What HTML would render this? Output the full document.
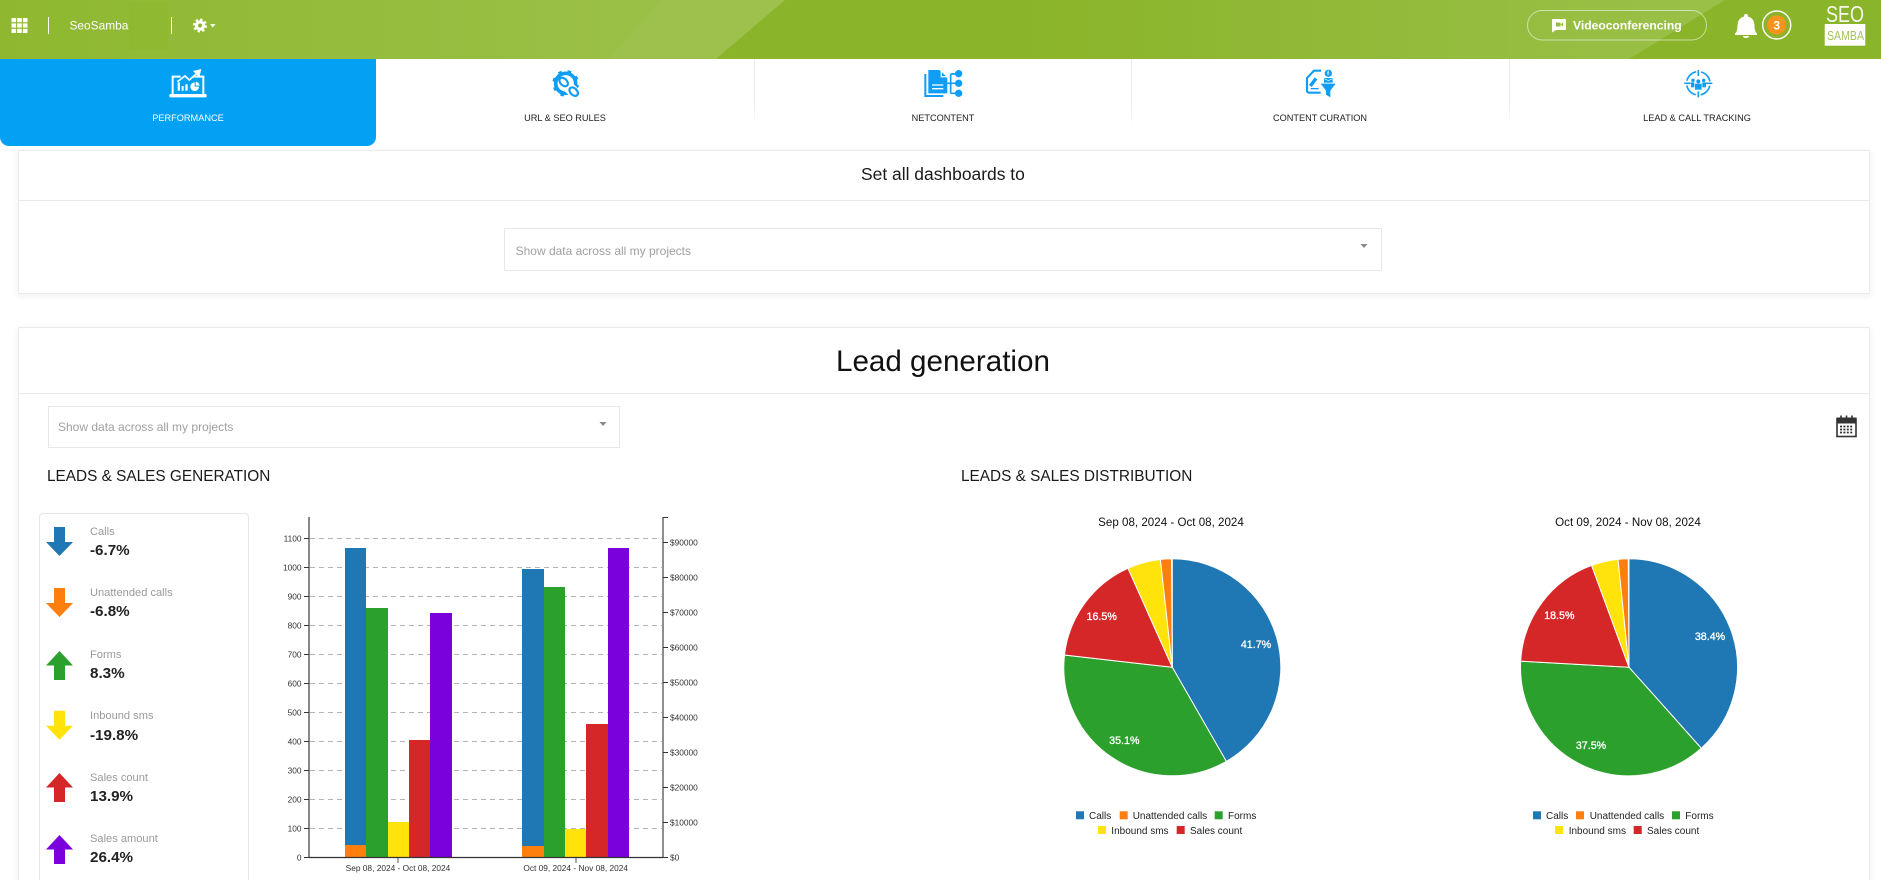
<!DOCTYPE html>
<html lang="en">
<head>
<meta charset="utf-8">
<title>SeoSamba dashboard</title>
<style>
html,body{margin:0;padding:0;width:1881px;height:880px;overflow:hidden;background:#fff;font-family:"Liberation Sans",Arial,sans-serif}
#p{position:relative;width:1881px;height:880px;overflow:hidden;background:#fff}
.t{position:absolute;white-space:nowrap;line-height:1}
.box{position:absolute;box-sizing:border-box;background:#fff}
.card{border:1px solid #ececec;box-shadow:0 2px 7px rgba(0,0,0,.07)}
.line{position:absolute;background:#e9e9e9;height:1px}
.sel{border:1px solid #e8e8e8}
.ph{font-size:12px;color:#a0a0a0}
.nav{font-size:9.2px;color:#222;width:200px;text-align:center;top:114px}
.div{position:absolute;top:59px;width:1px;height:68px;background:linear-gradient(#ececec 70%,#fff)}
.lab{font-size:11.1px;color:#9a9a9a;left:90px}
.val{font-size:15.2px;font-weight:bold;color:#222;left:90px}
.h2{font-size:15.37px;color:#1a1a1a}
svg#o{position:absolute;left:0;top:0}
svg text{font-family:"Liberation Sans",Arial,sans-serif}
</style>
</head>
<body>
<div id="p">

<div class="box card" style="left:18px;top:150px;width:1852px;height:144px"></div>
<div class="line" style="left:19px;top:200px;width:1850px"></div>
<div class="t" style="left:861px;top:166.4px;font-size:17.46px;color:#1a1a1a">Set all dashboards to</div>
<div class="box sel" style="left:504px;top:228px;width:878px;height:43px"></div>
<div class="t ph" style="left:515.6px;top:244.8px">Show data across all my projects</div>

<div class="box card" style="left:18px;top:327px;width:1852px;height:570px"></div>
<div class="line" style="left:19px;top:393px;width:1850px"></div>
<div class="t" style="left:836px;top:346.6px;font-size:29.6px;color:#111">Lead generation</div>
<div class="box sel" style="left:48px;top:406px;width:572px;height:42px"></div>
<div class="t ph" style="left:58px;top:420.8px">Show data across all my projects</div>
<div class="t h2" style="left:47px;top:469px">LEADS &amp; SALES GENERATION</div>
<div class="t h2" style="left:961px;top:469px">LEADS &amp; SALES DISTRIBUTION</div>

<div class="box" style="left:38.5px;top:513px;width:210px;height:400px;border:1px solid #e6e6e6;border-radius:4px"></div>
<div class="t lab" style="top:527.2px">Calls</div><div class="t val" style="top:542.6px">-6.7%</div>
<div class="t lab" style="top:588.2px">Unattended calls</div><div class="t val" style="top:604.3px">-6.8%</div>
<div class="t lab" style="top:650.2px">Forms</div><div class="t val" style="top:665.6px">8.3%</div>
<div class="t lab" style="top:711.2px">Inbound sms</div><div class="t val" style="top:727.6px">-19.8%</div>
<div class="t lab" style="top:772.5px">Sales count</div><div class="t val" style="top:788.6px">13.9%</div>
<div class="t lab" style="top:834.2px">Sales amount</div><div class="t val" style="top:849.6px">26.4%</div>

<div class="box" style="left:0;top:59px;width:376px;height:87px;background:#02a1f4;border-radius:0 0 9px 9px"></div>
<div class="div" style="left:754px"></div>
<div class="div" style="left:1131px"></div>
<div class="div" style="left:1509px"></div>
<div class="t nav" style="left:88px;color:#fff">PERFORMANCE</div>
<div class="t nav" style="left:465px">URL &amp; SEO RULES</div>
<div class="t nav" style="left:843px">NETCONTENT</div>
<div class="t nav" style="left:1220px">CONTENT CURATION</div>
<div class="t nav" style="left:1597px">LEAD &amp; CALL TRACKING</div>

<svg id="o" width="1881" height="880" viewBox="0 0 1881 880" xmlns="http://www.w3.org/2000/svg">
<defs>
<linearGradient id="g1" x1="0" x2="1" y1="0" y2="0"><stop offset="0" stop-color="#8fb830"/><stop offset="1" stop-color="#9bc047"/></linearGradient>
<linearGradient id="g2" x1="0" x2="1" y1="0" y2="0"><stop offset="0" stop-color="#8ab429"/><stop offset="1" stop-color="#9bc049"/></linearGradient>
</defs>

<!-- header -->
<rect width="1881" height="59" fill="#8ab429"/>
<polygon points="0,0 660,0 608,59 0,59" fill="url(#g1)"/>
<polygon points="660,0 785,0 716,59 608,59" fill="#9ec14e"/>
<rect x="129" y="2" width="39" height="48" fill="#8bb62c" opacity=".3"/>
<polygon points="1000,0 1725,0 1629,59 1000,59" fill="url(#g2)"/>
<g fill="#fff">
<rect x="11.5" y="18" width="4.6" height="4.2"/><rect x="17.2" y="18" width="4.6" height="4.2"/><rect x="22.9" y="18" width="4.6" height="4.2"/>
<rect x="11.5" y="23.4" width="4.6" height="4.2"/><rect x="17.2" y="23.4" width="4.6" height="4.2"/><rect x="22.9" y="23.4" width="4.6" height="4.2"/>
<rect x="11.5" y="28.8" width="4.6" height="4.2"/><rect x="17.2" y="28.8" width="4.6" height="4.2"/><rect x="22.9" y="28.8" width="4.6" height="4.2"/>
<rect x="48" y="17" width="1" height="17"/><rect x="171" y="17" width="1" height="17"/>
<circle cx="200" cy="25.5" r="5.2"/>
<polygon points="210,24 215.5,24 212.7,27.5" opacity=".9"/>
</g>
<circle cx="200" cy="25.5" r="5.9" fill="none" stroke="#fff" stroke-width="2.2" stroke-dasharray="2.32 2.32"/>
<circle cx="200" cy="25.5" r="2" fill="#8fb830"/>
<text x="69.5" y="29.3" font-size="11.9" fill="#fff">SeoSamba</text>

<rect x="1527.5" y="10.5" width="179" height="29.5" rx="14.7" fill="none" stroke="#fff" stroke-opacity=".55"/>
<path d="M1553 19h12a1 1 0 0 1 1 1v9a1 1 0 0 1-1 1h-9l-4 2.5v-12.5a1 1 0 0 1 1-1z" fill="#fff"/>
<rect x="1556" y="22.5" width="4.5" height="4" fill="#97bd40"/><polygon points="1560.5,24.5 1563,22.5 1563,26.5" fill="#97bd40"/>
<text x="1573" y="29.3" font-size="12.1" font-weight="bold" fill="#fff">Videoconferencing</text>
<path d="M1746 14c1.4 0 2 .9 2 2v.6c4.6 1 6.5 4.8 6.5 9c0 3.7.7 6 2.5 8v1.4h-22v-1.4c1.8-2 2.5-4.3 2.5-8c0-4.2 1.9-8 6.5-9v-.6c0-1.1.6-2 2-2z" fill="#fff"/>
<path d="M1742.8 36h6.4a3.2 2 0 0 1-6.4 0z" fill="#fff"/>
<circle cx="1776.7" cy="25" r="14" fill="none" stroke="#fff" stroke-width="1.4"/>
<circle cx="1776.7" cy="25" r="9.6" fill="#f7941d"/>
<text x="1776.7" y="29.3" font-size="12" font-weight="bold" fill="#fff" text-anchor="middle">3</text>
<text x="1826" y="22" font-size="23.5" fill="#fff" fill-opacity=".92" textLength="38" lengthAdjust="spacingAndGlyphs">SEO</text>
<rect x="1824.7" y="24" width="40.6" height="21.7" fill="#fff"/>
<text x="1827" y="40" font-size="13" fill="#a3c35f" textLength="37" lengthAdjust="spacingAndGlyphs">SAMBA</text>

<!-- nav icons -->
<g transform="translate(130 50) scale(.3333)">
<path d="M128 132V80H152M190 80H220V132" fill="none" stroke="#fff" stroke-width="6"/>
<rect x="118" y="132" width="112" height="10" rx="3" fill="#fff"/>
<polyline points="142,95 165,78 178,90 203,68" fill="none" stroke="#fff" stroke-width="5"/>
<polygon points="214,57 189,63 208,82" fill="#fff"/>
<rect x="143" y="97" width="7" height="25" fill="#fff"/><rect x="155" y="108" width="6" height="14" fill="#fff"/><rect x="166" y="103" width="7" height="19" fill="#fff"/>
<path d="M194 97a13 13 0 1 0 13 13h-13z" fill="#fff"/><path d="M197 95a13 13 0 0 1 12 12h-12z" fill="#fff"/>
</g>
<g transform="translate(530 50) scale(.3333)" fill="none" stroke="#0f9df5">
<circle cx="107" cy="100" r="30" stroke-width="11"/>
<circle cx="107" cy="100" r="37" stroke-width="6" stroke-dasharray="11 18" transform="rotate(8 107 100)"/>
<path d="M100 97L133 128" stroke="#fff" stroke-width="34" stroke-linecap="butt"/>
<ellipse cx="101" cy="96" rx="15" ry="10" stroke-width="6.5" transform="rotate(45 101 96)"/>
<ellipse cx="131" cy="125" rx="15" ry="10" stroke-width="6.5" transform="rotate(45 131 125)"/>
</g>
<g transform="translate(900 50) scale(.3333)">
<path d="M85 60H118L142 85V130H85z" fill="#0f9df5"/>
<polygon points="122,60 122,82 144,82" fill="#fff"/>
<polygon points="126,67 126,78 137,78" fill="#0f9df5"/>
<path d="M76 72V138H130" fill="none" stroke="#0f9df5" stroke-width="6"/>
<path d="M96 105H130M96 116H130" stroke="#fff" stroke-width="4"/>
<path d="M142 100H176M152 72V130M152 72H176M152 130H176" fill="none" stroke="#0f9df5" stroke-width="5"/>
<circle cx="176" cy="71" r="11" fill="#0f9df5"/><circle cx="176" cy="100" r="11" fill="#0f9df5"/><circle cx="176" cy="130" r="11" fill="#0f9df5"/>
</g>
<g transform="translate(1290 50) scale(.3333)">
<path d="M93 62H72L51 84V122a6 6 0 0 0 6 6H92" fill="none" stroke="#0f9df5" stroke-width="6.5"/>
<path d="M61 108L78 85" stroke="#0f9df5" stroke-width="10"/>
<path d="M62 116H86" stroke="#0f9df5" stroke-width="4"/>
<circle cx="115" cy="70" r="11" fill="#0f9df5"/><path d="M117 63h-3v14M111 69h7" stroke="#fff" stroke-width="2" fill="none"/>
<rect x="102" y="84" width="26" height="14" fill="#0f9df5"/><path d="M103 86l12 6l12-6" stroke="#fff" stroke-width="2" fill="none"/>
<polygon points="92,101 137,101 121,122 121,142 108,134 108,122" fill="#0f9df5"/>
</g>
<g transform="translate(1500 0) scale(.3333)" fill="#0f9df5">
<circle cx="595" cy="250" r="35" fill="none" stroke="#0f9df5" stroke-width="5" stroke-dasharray="40 15" stroke-dashoffset="-7.5"/>
<path d="M595 210V228M595 274V292M553 250H572M618 250H637" stroke="#0f9df5" stroke-width="5"/>
<circle cx="595" cy="244" r="6"/><rect x="585" y="251" width="20" height="18"/>
<circle cx="579" cy="241" r="5"/><rect x="573" y="247" width="10" height="15"/>
<circle cx="611" cy="241" r="5"/><rect x="607" y="247" width="11" height="15"/>
</g>

<!-- select carets -->
<polygon points="1360.5,244 1367.5,244 1364,248" fill="#8a8a8a"/>
<polygon points="599.5,422 606.5,422 603,426" fill="#8a8a8a"/>

<!-- calendar -->
<g fill="none" stroke="#333">
<rect x="1837" y="419" width="19" height="17.5" stroke-width="1.6"/>
<rect x="1837" y="418" width="19" height="5" fill="#333"/>
<path d="M1841 415.5v3M1846.5 415.5v3M1852 415.5v3" stroke-width="1.6"/>
<path d="M1840 426.5h13M1840 429.5h13M1840 432.5h13" stroke-width="1.7" stroke-dasharray="2 1.4"/>
</g>

<!-- trend arrows -->
<polygon transform="translate(0 527)" points="54,0 65,0 65,15 73,15 59.5,29 46,15 54,15" fill="#1f77b4"/>
<polygon transform="translate(0 588)" points="54,0 65,0 65,15 73,15 59.5,29 46,15 54,15" fill="#ff7f0e"/>
<polygon transform="translate(0 651)" points="59.5,0 73,14.5 65,14.5 65,29 54,29 54,14.5 46,14.5" fill="#2ca02c"/>
<polygon transform="translate(0 710.7)" points="54,0 65,0 65,15 73,15 59.5,29 46,15 54,15" fill="#ffe30a"/>
<polygon transform="translate(0 773)" points="59.5,0 73,14.5 65,14.5 65,29 54,29 54,14.5 46,14.5" fill="#d62728"/>
<polygon transform="translate(0 835)" points="59.5,0 73,14.5 65,14.5 65,29 54,29 54,14.5 46,14.5" fill="#7a00dc"/>

<!-- bar chart -->
<g stroke="#b4b4b4" stroke-dasharray="5 4">
<path d="M310 538.5H662M310 567.5H662M310 596.5H662M310 625.5H662M310 654.5H662M310 683.5H662M310 712.5H662M310 741.5H662M310 770.5H662M310 799.5H662M310 828.5H662"/>
</g>
<rect x="345" y="548" width="21" height="297" fill="#1f77b4"/><rect x="345" y="845" width="21" height="12.5" fill="#ff7f0e"/>
<rect x="366" y="608" width="22" height="249.5" fill="#2ca02c"/>
<rect x="388" y="822" width="21" height="35.5" fill="#ffe30a"/>
<rect x="409" y="740" width="21" height="117.5" fill="#d62728"/>
<rect x="430" y="613" width="22" height="244.5" fill="#7a00dc"/>
<rect x="522" y="569" width="22" height="277" fill="#1f77b4"/><rect x="522" y="846" width="22" height="11.5" fill="#ff7f0e"/>
<rect x="544" y="587" width="21" height="270.5" fill="#2ca02c"/>
<rect x="565" y="829" width="21" height="28.5" fill="#ffe30a"/>
<rect x="586" y="724" width="22" height="133.5" fill="#d62728"/>
<rect x="608" y="548" width="21" height="309.5" fill="#7a00dc"/>

<rect x="308" y="517" width="2" height="341" fill="#888"/>
<path d="M304 538.5H309M304 567.5H309M304 596.5H309M304 625.5H309M304 654.5H309M304 683.5H309M304 712.5H309M304 741.5H309M304 770.5H309M304 799.5H309M304 828.5H309M304 857.5H309" stroke="#333"/>
<path d="M309 857.5H663" stroke="#333" stroke-width="1.2"/>
<path d="M668 517.5H663V857.5M663 857.5H668M663 822.5H668M663 787.5H668M663 752.5H668M663 717.5H668M663 682.5H668M663 647.5H668M663 612.5H668M663 577.5H668M663 542.5H668" fill="none" stroke="#333" stroke-width="1.1"/>
<path d="M398 858V863M576 858V863" stroke="#555"/>
<g font-size="8.33" fill="#333" text-anchor="end">
<text x="301.5" y="541.3">1100</text><text x="301.5" y="570.3">1000</text><text x="301.5" y="599.3">900</text><text x="301.5" y="628.3">800</text><text x="301.5" y="657.3">700</text><text x="301.5" y="686.3">600</text><text x="301.5" y="715.3">500</text><text x="301.5" y="744.3">400</text><text x="301.5" y="773.3">300</text><text x="301.5" y="802.3">200</text><text x="301.5" y="831.3">100</text><text x="301.5" y="860.3">0</text>
</g>
<g font-size="8.33" fill="#333">
<text x="670" y="545.3">$90000</text><text x="670" y="580.3">$80000</text><text x="670" y="615.3">$70000</text><text x="670" y="650.3">$60000</text><text x="670" y="685.3">$50000</text><text x="670" y="720.3">$40000</text><text x="670" y="755.3">$30000</text><text x="670" y="790.3">$20000</text><text x="670" y="825.3">$10000</text><text x="670" y="860.3">$0</text>
</g>
<g font-size="8.33" fill="#333" text-anchor="middle">
<text x="398" y="871">Sep 08, 2024 - Oct 08, 2024</text>
<text x="575.7" y="871">Oct 09, 2024 - Nov 08, 2024</text>
</g>

<!-- pie 1 -->
<text x="1171" y="525.8" font-size="11.6" fill="#111" text-anchor="middle">Sep 08, 2024 - Oct 08, 2024</text>
<g transform="translate(1172.3 667.3)" stroke="#fff" stroke-width="1">
<circle r="108.5" fill="#bbb" stroke="none"/>
<path d="M0 0V-108.5A108.5 108.5 0 0 1 54.05 94.08Z" fill="#1f77b4"/>
<path d="M0 0L54.05 94.08A108.5 108.5 0 0 1 -107.8 -12.25Z" fill="#2ca02c"/>
<path d="M0 0L-107.8 -12.25A108.5 108.5 0 0 1 -44.33 -99.03Z" fill="#d62728"/>
<path d="M0 0L-44.33 -99.03A108.5 108.5 0 0 1 -11.9 -107.85Z" fill="#ffe30a"/>
<path d="M0 0L-11.9 -107.85A108.5 108.5 0 0 1 -.76 -108.5Z" fill="#ff7f0e"/>
</g>
<g font-size="10.7" fill="#fff" stroke="#fff" stroke-width=".3" text-anchor="middle">
<text x="1256" y="648">41.7%</text><text x="1124.3" y="744">35.1%</text><text x="1101.7" y="620">16.5%</text>
</g>
<g font-size="10" fill="#222">
<rect x="1076" y="811.3" width="8" height="8" fill="#1f77b4"/><text x="1089" y="819">Calls</text>
<rect x="1119.7" y="811.3" width="8" height="8" fill="#ff7f0e"/><text x="1132.7" y="819">Unattended calls</text>
<rect x="1214.7" y="811.3" width="8" height="8" fill="#2ca02c"/><text x="1228" y="819">Forms</text>
<rect x="1098" y="826" width="8" height="8" fill="#ffe30a"/><text x="1111.3" y="834">Inbound sms</text>
<rect x="1176.7" y="826" width="8" height="8" fill="#d62728"/><text x="1190" y="834">Sales count</text>
</g>

<!-- pie 2 -->
<text x="1628" y="525.8" font-size="11.6" fill="#111" text-anchor="middle">Oct 09, 2024 - Nov 08, 2024</text>
<g transform="translate(1629 667.3)" stroke="#fff" stroke-width="1">
<circle r="108.5" fill="#bbb" stroke="none"/>
<path d="M0 0V-108.5A108.5 108.5 0 0 1 72.27 80.93Z" fill="#1f77b4"/>
<path d="M0 0L72.27 80.93A108.5 108.5 0 0 1 -108.33 -6.13Z" fill="#2ca02c"/>
<path d="M0 0L-108.33 -6.13A108.5 108.5 0 0 1 -37.4 -101.85Z" fill="#d62728"/>
<path d="M0 0L-37.4 -101.85A108.5 108.5 0 0 1 -10.97 -107.94Z" fill="#ffe30a"/>
<path d="M0 0L-10.97 -107.94A108.5 108.5 0 0 1 -.76 -108.5Z" fill="#ff7f0e"/>
</g>
<g font-size="10.7" fill="#fff" stroke="#fff" stroke-width=".3" text-anchor="middle">
<text x="1710" y="640">38.4%</text><text x="1591" y="749">37.5%</text><text x="1559.3" y="619">18.5%</text>
</g>
<g font-size="10" fill="#222">
<rect x="1533" y="811.3" width="8" height="8" fill="#1f77b4"/><text x="1546" y="819">Calls</text>
<rect x="1576" y="811.3" width="8" height="8" fill="#ff7f0e"/><text x="1589.7" y="819">Unattended calls</text>
<rect x="1672" y="811.3" width="8" height="8" fill="#2ca02c"/><text x="1685.3" y="819">Forms</text>
<rect x="1555" y="826" width="8" height="8" fill="#ffe30a"/><text x="1568.7" y="834">Inbound sms</text>
<rect x="1633.7" y="826" width="8" height="8" fill="#d62728"/><text x="1647" y="834">Sales count</text>
</g>
</svg>
</div>
</body>
</html>
